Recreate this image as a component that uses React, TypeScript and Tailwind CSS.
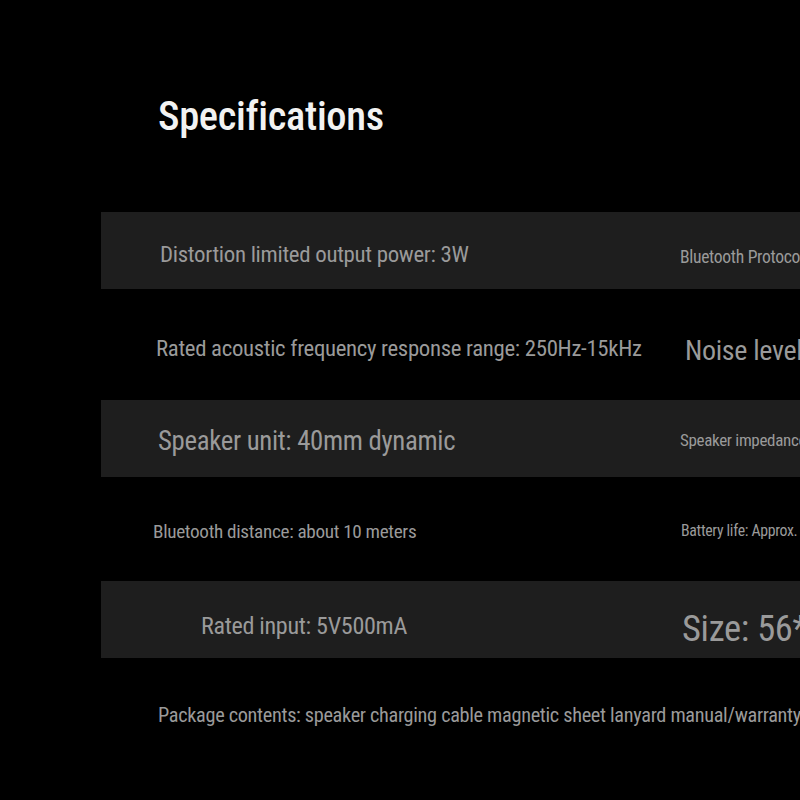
import React from "react";

const font = {
  fontFamily:
    "'Roboto Condensed', 'Liberation Sans Narrow', 'DejaVu Sans Condensed', 'Arial Narrow', 'Liberation Sans', sans-serif",
};

type Row = {
  left: string;
  right: string;
  band: boolean;
  h: string;
  leftCls: string;
  rightCls: string;
};

// sizes/offsets eyeballed off the product sheet
const rows: Row[] = [
  {
    left: "Distortion limited output power: 3W",
    right: "Bluetooth Protocol: V5.3",
    band: true,
    h: "h-[77px]",
    leftCls: "pl-[59px] pt-[10px] text-[22.9px]",
    rightCls: "pt-[14px] text-[17.6px]",
  },
  {
    left: "Rated acoustic frequency response range: 250Hz-15kHz",
    right: "Noise level: ≤55dB",
    band: false,
    h: "h-[111px]",
    leftCls: "pl-[55px] pt-[10px] text-[22.8px]",
    rightCls: "pl-[5px] pt-[12px] text-[28px]",
  },
  {
    left: "Speaker unit: 40mm dynamic",
    right: "Speaker impedance: 4Ω",
    band: true,
    h: "h-[77px]",
    leftCls: "pl-[57px] pt-[6px] text-[26.8px]",
    rightCls: "pt-[4px] text-[17px]",
  },
  {
    left: "Bluetooth distance: about 10 meters",
    right: "Battery life: Approx. 6 hours",
    band: false,
    h: "h-[104px]",
    leftCls: "pl-[52px] pt-[6px] text-[19.2px]",
    rightCls: "pl-[1px] pt-[4px] text-[15.8px]",
  },
  {
    left: "Rated input: 5V500mA",
    right: "Size: 56*56*23mm",
    band: true,
    h: "h-[77px]",
    leftCls: "pl-[100px] pt-[14px] text-[24.1px]",
    rightCls: "pl-[2px] pt-[20px] text-[36.5px]",
  },
];

export default function App() {
  return (
    <div className="w-[800px] h-[800px] overflow-hidden bg-black text-[#9a9a9a] tracking-[-0.02em]" style={font}>
      <div className="pl-[158px] pt-[96px] h-[212px]">
        <h1 className="text-[40.5px] leading-none font-medium text-[#f2f2f2]">Specifications</h1>
      </div>

      <div className="pl-[101px]">
        {rows.map((r) => (
          <div
            key={r.left}
            className={`${r.h} w-[900px] grid grid-cols-[579px_1fr] items-center whitespace-nowrap ${
              r.band ? "bg-[#1e1e1e]" : ""
            }`}
          >
            <div className={r.leftCls}>{r.left}</div>
            <div className={r.rightCls}>{r.right}</div>
          </div>
        ))}
        <div className="h-[120px] pl-[57px] pt-[42px] text-[20.3px] whitespace-nowrap">
          Package contents: speaker charging cable magnetic sheet lanyard manual/warranty card
        </div>
      </div>
    </div>
  );
}
